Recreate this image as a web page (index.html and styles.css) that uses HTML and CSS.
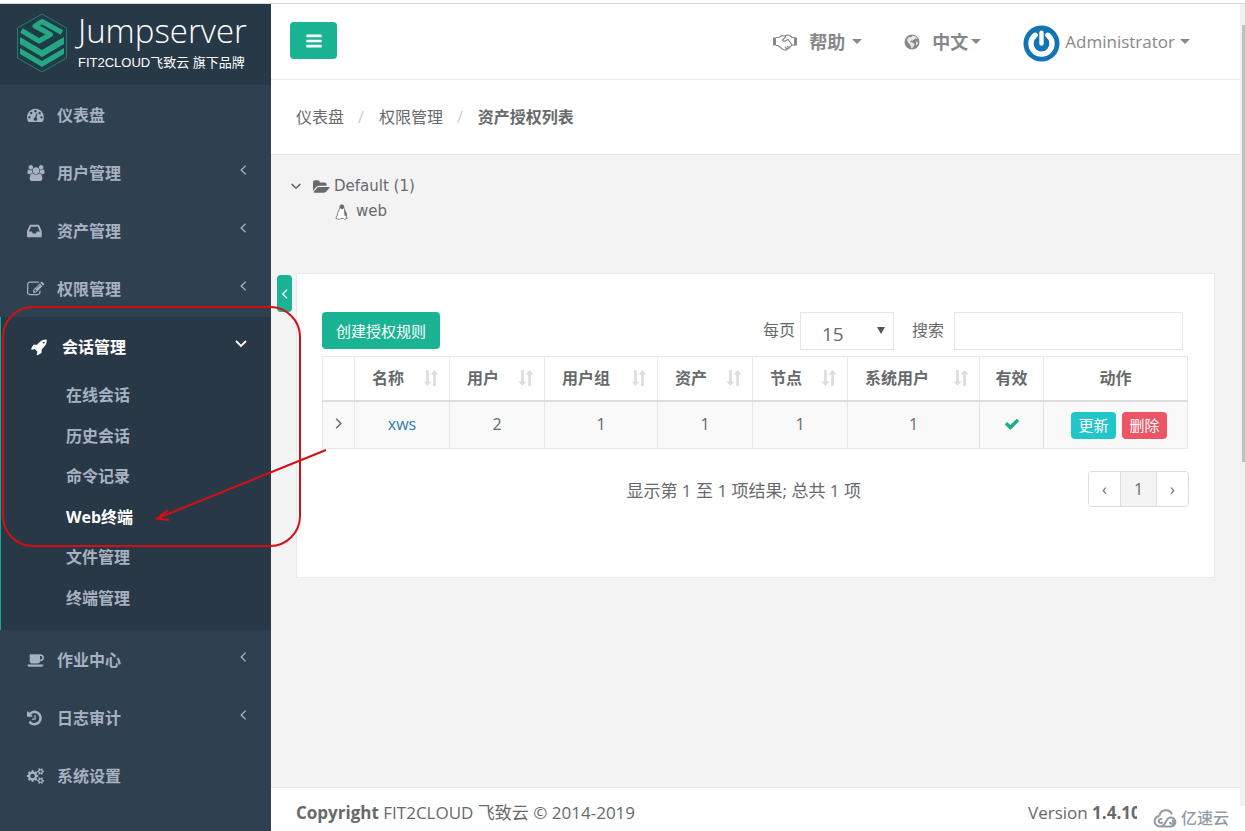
FILE: index.html
```html
<!DOCTYPE html>
<html lang="zh-CN">
<head>
<meta charset="utf-8">
<title>Jumpserver</title>
<link rel="stylesheet" href="styles.css">
</head>
<body>
<svg class="sprite" aria-hidden="true">
  <symbol id="i-left" viewBox="0 0 10 16"><path d="M8 3L3 8l5 5" fill="none" stroke="currentColor" stroke-width="1.6"/></symbol>
  <symbol id="i-right" viewBox="0 0 10 16"><path d="M2 3l5 5-5 5" fill="none" stroke="currentColor" stroke-width="1.6"/></symbol>
  <symbol id="i-down" viewBox="0 0 16 10"><path d="M3 2l5 5 5-5" fill="none" stroke="currentColor" stroke-width="1.8"/></symbol>
  <symbol id="i-sort" viewBox="0 0 18 20"><path d="M3.500 1h3v13h3L5 19 .5 14h3zM11.500 19h3V6h3L13 1 8.500 6h3z" fill="currentColor"/></symbol>
</svg>
<div class="app">
  <nav class="sidebar">
    <a class="brand" href="#">
      <svg class="brand-mark" viewBox="0 0 52 60" aria-hidden="true">
        <path d="M26 1l24.500 14v30L26 59 1.500 45V15z" fill="#1d3c46" stroke="#2b7a70"/>
        <path d="M5.500 17.500L23 28l11.500-6.500L19 13l7-4.500 20 11" fill="none" stroke="#26a784" stroke-width="5" stroke-linejoin="round"/>
        <path d="M4 24l22 13 22-13v7L26 44 4 31zM4 35l22 13 22-13v6L26 54 4 41z" fill="#26a784"/>
      </svg>
      <span class="brand-text"><span class="brand-name">Jumpserver</span><span class="brand-sub">FIT2CLOUD飞致云 旗下品牌</span></span>
    </a>
    <ul class="menu">
      <li><a href="#"><svg class="icon" viewBox="0 64 1700 1700" preserveAspectRatio="xMinYMid"><path d="M384 1152q0-53-37.500-90.500t-90.500-37.500-90.500 37.500-37.500 90.500 37.500 90.500 90.500 37.500 90.500-37.500 37.500-90.500zm192-448q0-53-37.500-90.500t-90.500-37.500-90.500 37.500-37.500 90.500 37.500 90.500 90.500 37.500 90.500-37.500 37.500-90.500zm428 481l101-382q6-26-7.500-48.500t-38.500-29.500-48 6.500-30 39.500l-101 382q-60 5-107 43.500t-63 98.500q-20 77 20 146t117 89 146-20 89-117q16-60-6-117t-72-91zm660-33q0-53-37.500-90.500t-90.500-37.500-90.500 37.500-37.500 90.500 37.500 90.500 90.500 37.500 90.500-37.500 37.500-90.500zm-640-640q0-53-37.500-90.500t-90.500-37.500-90.500 37.500-37.500 90.500 37.500 90.500 90.500 37.500 90.500-37.500 37.500-90.500zm448 192q0-53-37.500-90.500t-90.500-37.500-90.500 37.500-37.500 90.500 37.500 90.500 90.500 37.500 90.500-37.500 37.500-90.500zm320 448q0 261-141 483-19 29-54 29h-1402q-35 0-54-29-141-221-141-483 0-182 71-348t191-286 286-191 348-71 348 71 286 191 191 286 71 348z"/></svg><span>仪表盘</span></a></li>
      <li><a href="#"><svg class="icon" viewBox="0 0 1920 1792"><path d="M593 896q-162 5-265 128h-134q-82 0-138-40.500t-56-118.500q0-353 124-353 6 0 43.500 21t97.500 42.500 119 21.500q67 0 133-23-5 37-5 66 0 159 81 286zm1071 637q0 120-73 189.500t-194 69.500h-874q-121 0-194-69.500t-73-189.500q0-53 3.500-103.500t14-109 26.500-108.500 43-97.500 62-81 85.500-53.500 111.500-20q10 0 43 21.500t73 48 107 48 135 21.500 135-21.500 107-48 73-48 43-21.500q61 0 111.500 20t85.500 53.500 62 81 43 97.500 26.500 108.500 14 109 3.500 103.500zm-1024-1277q0 106-75 181t-181 75-181-75-75-181 75-181 181-75 181 75 75 181zm704 384q0 159-112.500 271.500t-271.500 112.500-271.500-112.500-112.500-271.500 112.500-271.500 271.500-112.500 271.500 112.500 112.500 271.500zm576 225q0 78-56 118.500t-138 40.500h-134q-103-123-265-128 81-127 81-286 0-29-5-66 66 23 133 23 59 0 119-21.500t97.500-42.500 43.500-21q124 0 124 353zm-128-609q0 106-75 181t-181 75-181-75-75-181 75-181 181-75 181 75 75 181z"/></svg><span>用户管理</span><svg class="arrow"><use href="#i-left"/></svg></a></li>
      <li><a href="#"><svg class="icon" viewBox="128 64 1664 1664" preserveAspectRatio="xMinYMid"><path d="M1151 960h316q-1-3-2.500-8.500t-2.500-7.500l-212-496h-708l-212 496q-1 3-2.500 8.500t-2.500 7.500h316l95 192h320zm513 30v482q0 26-19 45t-45 19h-1408q-26 0-45-19t-19-45v-482q0-62 25-123l238-552q10-25 36.500-42t52.500-17h832q26 0 52.500 17t36.500 42l238 552q25 61 25 123z"/></svg><span>资产管理</span><svg class="arrow"><use href="#i-left"/></svg></a></li>
      <li><a href="#"><svg class="icon" viewBox="0 64 1664 1664" preserveAspectRatio="xMinYMid"><path d="M888 1184l116-116-152-152-116 116v56h96v96h56zm440-720q-16-16-33 1l-350 350q-17 17-1 33t33-1l350-350q17-17 1-33zm80 594v190q0 119-84.500 203.500t-203.500 84.500h-832q-119 0-203.500-84.500t-84.500-203.500v-832q0-119 84.500-203.500t203.500-84.500h832q63 0 117 25 15 7 18 23 3 17-9 29l-49 49q-14 14-32 8-23-6-45-6h-832q-66 0-113 47t-47 113v832q0 66 47 113t113 47h832q66 0 113-47t47-113v-126q0-13 9-22l64-64q15-15 35-7t20 29zm-96-738l288 288-672 672h-288v-288zm444 132l-92 92-288-288 92-92q28-28 68-28t68 28l152 152q28 28 28 68t-28 68z"/></svg><span>权限管理</span><svg class="arrow"><use href="#i-left"/></svg></a></li>
      <li class="open">
        <a href="#"><svg class="icon" viewBox="128 64 1664 1664" preserveAspectRatio="xMinYMid"><path d="M1440 448q0-40-28-68t-68-28-68 28-28 68 28 68 68 28 68-28 28-68zm224-288q0 249-75.500 430.500t-253.500 360.500q-81 80-195 176l-20 379q-2 16-16 26l-384 224q-7 4-16 4-12 0-23-9l-64-64q-13-14-8-32l85-276-281-281-276 85q-3 1-9 1-14 0-23-9l-64-64q-17-19-5-39l224-384q10-14 26-16l379-20q96-114 176-195 188-187 358-258t431-71q14 0 24 9.500t10 22.500z"/></svg><span>会话管理</span><svg class="arrow arrow-down"><use href="#i-down"/></svg></a>
        <ul class="submenu">
          <li><a href="#">在线会话</a></li>
          <li><a href="#">历史会话</a></li>
          <li><a href="#">命令记录</a></li>
          <li><a class="current" href="#">Web终端</a></li>
          <li><a href="#">文件管理</a></li>
          <li><a href="#">终端管理</a></li>
        </ul>
      </li>
      <li><a href="#"><svg class="icon" viewBox="0 0 1920 1792"><path d="M1664 640q0-80-56-136t-136-56h-64v384h64q80 0 136-56t56-136zm-1664 768h1792q0 106-75 181t-181 75h-1280q-106 0-181-75t-75-181zm1856-768q0 159-112.500 271.500t-271.500 112.500h-64v32q0 92-66 158t-158 66h-704q-92 0-158-66t-66-158v-736q0-26 19-45t45-19h1152q159 0 271.500 112.500t112.500 271.500z"/></svg><span>作业中心</span><svg class="arrow"><use href="#i-left"/></svg></a></li>
      <li><a href="#"><svg class="icon" viewBox="128 64 1664 1664" preserveAspectRatio="xMinYMid"><path d="M1664 896q0 156-61 298t-164 245-245 164-298 61q-172 0-327-72.500t-264-204.500q-7-10-6.500-22.500t8.500-20.500l137-138q10-9 25-9 16 2 23 12 73 95 179 147t225 52q104 0 198.500-40.500t163.500-109.500 109.500-163.500 40.500-198.500-40.500-198.500-109.500-163.500-163.500-109.500-198.500-40.500q-98 0-188 35.500t-160 101.500l137 138q31 30 14 69-17 40-59 40h-448q-26 0-45-19t-19-45v-448q0-42 40-59 39-17 69 14l130 129q107-101 244.500-156.500t284.500-55.500q156 0 298 61t245 164 164 245 61 298zm-640-288v448q0 14-9 23t-23 9h-320q-14 0-23-9t-9-23v-64q0-14 9-23t23-9h224v-352q0-14 9-23t23-9h64q14 0 23 9t9 23z"/></svg><span>日志审计</span><svg class="arrow"><use href="#i-left"/></svg></a></li>
      <li><a href="#"><svg class="icon" viewBox="0 0 1920 1792"><path d="M832 896q0-106-75-181t-181-75-181 75-75 181 75 181 181 75 181-75 75-181zm768 512q0-52-38-90t-90-38-90 38-38 90q0 53 37.500 90.500t90.500 37.500 90.500-37.500 37.500-90.500zm0-1024q0-52-38-90t-90-38-90 38-38 90q0 53 37.500 90.500t90.500 37.500 90.500-37.500 37.500-90.500zm-384 421v185q0 10-7 19.500t-16 10.500l-155 24q-11 35-32 76 34 48 90 115 7 11 7 20 0 12-7 19-23 30-82.500 89.500t-78.500 59.500q-11 0-21-7l-115-90q-37 19-77 31-11 108-23 155-7 24-30 24h-186q-11 0-20-7.500t-10-17.500l-23-153q-34-10-75-31l-118 89q-7 7-20 7-11 0-21-8-144-133-144-160 0-9 7-19 10-14 41-53t47-61q-23-44-35-82l-152-24q-10-1-17-9.500t-7-19.500v-185q0-10 7-19.500t16-10.500l155-24q11-35 32-76-34-48-90-115-7-11-7-20 0-12 7-20 22-30 82-89t79-59q11 0 21 7l115 90q34-18 77-32 11-108 23-154 7-24 30-24h186q11 0 20 7.500t10 17.500l23 153q34 10 75 31l118-89q8-7 20-7 11 0 21 8 144 133 144 160 0 8-7 19-12 16-42 54t-45 60q23 48 34 82l152 23q10 2 17 10.500t7 19.500zm640 533v140q0 16-149 31-12 27-30 52 51 113 51 138 0 4-4 7-122 71-124 71-8 0-46-47t-52-68q-20 2-30 2t-30-2q-14 21-52 68t-46 47q-2 0-124-71-4-3-4-7 0-25 51-138-18-25-30-52-149-15-149-31v-140q0-16 149-31 13-29 30-52-51-113-51-138 0-4 4-7 4-2 35-20t59-34 30-16q8 0 46 46.500t52 67.500q20-2 30-2t30 2q51-71 92-112l6-2q4 0 124 70 4 3 4 7 0 25-51 138 17 23 30 52 149 15 149 31zm0-1024v140q0 16-149 31-12 27-30 52 51 113 51 138 0 4-4 7-122 71-124 71-8 0-46-47t-52-68q-20 2-30 2t-30-2q-14 21-52 68t-46 47q-2 0-124-71-4-3-4-7 0-25 51-138-18-25-30-52-149-15-149-31v-140q0-16 149-31 13-29 30-52-51-113-51-138 0-4 4-7 4-2 35-20t59-34 30-16q8 0 46 46.500t52 67.500q20-2 30-2t30 2q51-71 92-112l6-2q4 0 124 70 4 3 4 7 0 25-51 138 17 23 30 52 149 15 149 31z"/></svg><span>系统设置</span></a></li>
    </ul>
  </nav>

  <div class="page">
    <header class="topbar">
      <button class="toggle" type="button" aria-label="菜单"><svg class="icon" viewBox="0 0 1792 1792"><path d="M1664 1344v128q0 26-19 45t-45 19h-1408q-26 0-45-19t-19-45v-128q0-26 19-45t45-19h1408q26 0 45 19t19 45zm0-512v128q0 26-19 45t-45 19h-1408q-26 0-45-19t-19-45v-128q0-26 19-45t45-19h1408q26 0 45 19t19 45zm0-512v128q0 26-19 45t-45 19h-1408q-26 0-45-19t-19-45v-128q0-26 19-45t45-19h1408q26 0 45 19t19 45z"/></svg></button>
      <div class="toplinks">
        <a class="toplink" href="#"><svg class="handshake" viewBox="0 0 24 18" aria-hidden="true"><path d="M1.500 4.500v8M22.500 4.500v8" stroke-width="3"/><path d="M3 4.500h3l3-2 3 .5 2-1 3 .5 2 2h3M3 12.500h2l5 4 3 .5 3-2 3-3h3M13 3.500L9.500 7q1 2.500 3.500.5L15 6.500l4 5M14 13l2 2M12 14l2 2" stroke-width="1.200"/></svg><b>帮助</b><i class="caret"></i></a>
        <a class="toplink language" href="#"><svg class="globe" viewBox="0 0 16 16" aria-hidden="true"><circle cx="8" cy="8" r="7.500" fill="currentColor"/><path d="M8.500 1.500l3 1 2 2-1 .5-1-.5-1.500 1-1.500 1L7 6.500l-1 1.500 2.500.5 2 1.500-.5 2-2 2.500-1-1-.5-2.500L5 9.500 3.500 7.500 3 5.500l2-2.500 1 .5 1.500-.5zM12 8l1.500-.5.5 2-1.500 2-.5-1.500z" fill="#fff" opacity=".8"/></svg><b>中文</b><i class="caret"></i></a>
        <a class="toplink user" href="#"><svg class="avatar" viewBox="0 0 38 38" aria-hidden="true"><circle cx="19" cy="19" r="18.500" fill="#1274b5"/><path d="M12.500 10.500A10.800 10.800 0 1 0 25.500 10.500" fill="none" stroke="#fff" stroke-width="5.500" stroke-linecap="round"/><path d="M19 8v11" stroke="#fff" stroke-width="4.500" stroke-linecap="round"/></svg><span>Administrator</span><i class="caret"></i></a>
      </div>
    </header>

    <ol class="crumbs">
      <li><a href="#">仪表盘</a></li>
      <li><a href="#">权限管理</a></li>
      <li><strong>资产授权列表</strong></li>
    </ol>

    <main class="content">
      <ul class="tree">
        <li><svg class="tree-toggle"><use href="#i-down"/></svg><svg class="folder" viewBox="0 0 1920 1792" aria-hidden="true"><path d="M1879 952q0 31-31 66l-336 396q-43 51-120.500 86.500t-143.500 35.500h-1088q-34 0-60.500-13t-26.500-43q0-31 31-66l336-396q43-51 120.500-86.500t143.500-35.500h1088q34 0 60.500 13t26.500 43zm-343-344v160h-832q-94 0-197 47.500t-164 119.500l-337 396-5 6v-985q0-92 66-158t158-66h320q92 0 158 66t66 158v32h544q92 0 158 66t66 158z"/></svg><span>Default (1)</span></li>
        <li class="leaf"><svg class="linux" viewBox="0 0 14 16" aria-hidden="true"><path d="M5 1.500q2-2 3.500 0Q9 5 10.500 7.500q2 3 .5 5.500l1.500 1-3 1.500-1-1h-3l-1 1L1 14.500 1.500 12l1-.5q-.5-2 1-4.500Q5 5 5 1.500z" fill="#fff" stroke="currentColor" stroke-width=".8"/><path d="M5.500 1h3L9 4l-2 1.500L5 4zM9 5l2.500 4.500v3l-2-1z" fill="currentColor"/></svg><span>web</span></li>
      </ul>

      <section class="panel">
        <button class="fold" type="button" aria-label="收起"><svg><use href="#i-left"/></svg></button>
        <div class="tools">
          <button class="btn create" type="button">创建授权规则</button>
          <div class="filters">
            <label for="size">每页</label>
            <span class="select-wrap"><select id="size"><option>15</option></select></span>
            <label class="search-label" for="q">搜索</label>
            <input id="q" type="text">
          </div>
        </div>
        <table class="grid">
          <colgroup><col class="c1"><col class="c2"><col class="c2"><col class="c3"><col class="c2"><col class="c2"><col class="c4"><col class="c5"><col class="c6"></colgroup>
          <thead><tr>
            <th></th>
            <th class="sort"><div><span>名称</span><svg><use href="#i-sort"/></svg></div></th>
            <th class="sort"><div><span>用户</span><svg><use href="#i-sort"/></svg></div></th>
            <th class="sort"><div><span>用户组</span><svg><use href="#i-sort"/></svg></div></th>
            <th class="sort"><div><span>资产</span><svg><use href="#i-sort"/></svg></div></th>
            <th class="sort"><div><span>节点</span><svg><use href="#i-sort"/></svg></div></th>
            <th class="sort"><div><span>系统用户</span><svg><use href="#i-sort"/></svg></div></th>
            <th>有效</th>
            <th>动作</th>
          </tr></thead>
          <tbody><tr>
            <td><svg class="expand"><use href="#i-right"/></svg></td>
            <td><a href="#">xws</a></td>
            <td>2</td><td>1</td><td>1</td><td>1</td><td>1</td>
            <td><svg class="check" viewBox="0 0 1792 1792"><path d="M1671 566q0 40-28 68l-724 724-136 136q-28 28-68 28t-68-28l-136-136-362-362q-28-28-28-68t28-68l136-136q28-28 68-28t68 28l294 295 656-657q28-28 68-28t68 28l136 136q28 28 28 68z"/></svg></td>
            <td><div class="actions"><button class="btn update" type="button">更新</button><button class="btn delete" type="button">删除</button></div></td>
          </tr></tbody>
        </table>
        <div class="results">
          <p>显示第 1 至 1 项结果; 总共 1 项</p>
          <div class="pager"><button type="button">‹</button><button class="on" type="button">1</button><button type="button">›</button></div>
        </div>
      </section>
    </main>

    <footer class="footer">
      <div><strong>Copyright</strong> FIT2CLOUD 飞致云 © 2014-2019</div>
      <div class="version">Version <strong>1.4.10</strong></div>
    </footer>
  </div>
  <div class="scroll"><div class="thumb"></div></div>
</div>

<svg class="marks" viewBox="0 0 340 260" aria-hidden="true">
  <rect x="3" y="7" width="297" height="239" rx="30"/>
  <path d="M326 150L158 218M168 210l-11 8.500 12 1.500"/>
</svg>
<div class="watermark"><svg viewBox="0 0 26 20" aria-hidden="true"><path d="M6.500 7.500a6.500 6.500 0 0 1 12.500-1M9 11.500a2 2 0 1 0 .5 2.500M6.500 8a5.300 5.300 0 1 0 5 8l3-5a4.500 4.500 0 1 1 3.500 7.500H7M17 14a1.700 1.700 0 1 0 2-1.500"/></svg><span>亿速云</span></div>
</body>
</html>
```
FILE: styles.css
```css
* { box-sizing: border-box; }
body { margin: 0; min-height: 100vh; background: #fff; color: #676a6c; font: 16px/24px "Open Sans", "Noto Sans CJK SC", sans-serif; }
a { color: inherit; text-decoration: none; }
ul, ol { list-style: none; margin: 0; padding: 0; }
button, input, select { font: inherit; }
button { cursor: pointer; border: 0; padding: 0; }
svg { display: block; flex: none; }
.sprite { display: none; }

.app { display: flex; min-height: 100vh; padding-top: 4px; position: relative; }
.app::before { content: ""; position: absolute; top: 3px; left: 0; right: 0; border-top: 1px solid #d9d9d9; }

.sidebar { flex: none; width: 271px; background: #2f4050; color: #a7b1c2; font-weight: 600; }
.brand { display: flex; align-items: flex-start; gap: 10px; height: 81px; padding: 9px 16px; background: #273847; color: #fff; }
.brand-mark { width: 52px; height: 60px; }
.brand-text { display: flex; flex-direction: column; font-weight: 400; white-space: nowrap; }
.brand-name { font: 300 33px/36px "Open Sans", sans-serif; }
.brand-sub { font: 13px/28px "Liberation Sans", "Noto Sans CJK SC", sans-serif; }
.menu a { display: flex; align-items: center; height: 58px; padding: 2px 23px 0 27px; }
.menu a span { flex: 1; margin-left: 12px; }
.icon { width: 18px; height: 16px; fill: currentColor; overflow: visible; }
.arrow { width: 10px; height: 14px; margin-bottom: 6px; }
.arrow-down { width: 16px; height: 10px; }
.open { background: #293846; border-left: 1px solid #19aa8d; padding-bottom: 12px; }
.open > a { color: #fff; padding: 2px 22px 0 31px; }
.submenu { display: grid; grid-template-rows: repeat(6, 1fr); height: 243px; }
.menu .submenu a { height: 100%; padding: 0 0 0 65px; }
.submenu .current { color: #fff; font-weight: 700; }

.page { flex: 1; min-width: 0; display: flex; flex-direction: column; }
.topbar { display: flex; justify-content: space-between; height: 76px; padding: 0 50px 0 19px; border-bottom: 1px solid #e7eaec; }
.toggle { width: 47px; height: 37px; margin-top: 18px; border-radius: 4px; background: #1ab394; color: #fff; display: flex; align-items: center; justify-content: center; }
.toggle .icon { width: 18px; height: 18px; }
.toplinks { display: flex; align-items: center; gap: 42px; color: #888; }
.toplink { display: flex; align-items: center; gap: 7px; font-size: 17px; }
.toplink b { font-weight: 700; font-size: 18px; }
.handshake { width: 24px; height: 18px; margin-right: 5px; fill: none; stroke: currentColor; }
.globe { width: 16px; height: 16px; margin-right: 9px; }
.language { gap: 3px; }
.avatar { width: 37px; height: 37px; margin-top: 3px; }
.user { gap: 5px; }
.caret { border: 5px solid transparent; border-top-color: currentColor; border-bottom: 0; }

.crumbs { display: flex; align-items: center; height: 75px; padding-left: 25px; border-bottom: 1px solid #e7eaec; }
.crumbs li + li::before { content: "/"; color: #ccc; padding: 0 15px 0 14px; }
.crumbs strong { font-weight: 600; }

.content { flex: 1; background: #f3f3f4; padding: 19px 25px; }
.tree { height: 99px; font: 15px/25px "DejaVu Sans", sans-serif; }
.tree li { display: flex; align-items: center; height: 25px; margin-left: -7px; }
.tree-toggle { width: 14px; height: 9px; margin-right: 10px; }
.folder { width: 17px; height: 16px; margin-right: 4px; fill: currentColor; }
.tree .leaf { padding-left: 46px; }
.linux { width: 14px; height: 16px; margin-right: 7px; }

.panel { position: relative; background: #fff; border: 1px solid #e7eaec; padding: 38px 26px 70px 25px; }
.fold { position: absolute; left: -20px; top: 1px; width: 15px; height: 37px; border-radius: 4px; background: #1ab394; color: #fff; display: grid; place-items: center; }
.fold svg { width: 9px; height: 14px; }
.tools { display: flex; justify-content: space-between; margin-bottom: 6px; }
.btn { color: #fff; border-radius: 4px; }
.create { width: 118px; height: 37px; font-size: 15px; background: #1ab394; }
.filters { display: flex; align-items: center; padding-right: 5px; }
.filters label { padding-bottom: 3px; }
.select-wrap { position: relative; margin-left: 5px; }
.select-wrap::after { content: ""; position: absolute; right: 9px; top: 15px; border: 4px solid transparent; border-top: 7px solid #555; border-bottom: 0; pointer-events: none; }
select { appearance: none; display: block; width: 94px; height: 38px; padding: 5px 20px 0 21px; border: 1px solid #e5e6e7; border-radius: 0; background: #fff; color: inherit; font-size: 19px; }
.search-label { margin-left: 18px; }
.filters input { width: 229px; height: 38px; margin-left: 10px; border: 1px solid #e5e6e7; padding: 6px 12px; }

.grid { width: 100%; table-layout: fixed; border-collapse: collapse; text-align: center; }
.grid th, .grid td { border: 1px solid #e7e7e7; padding: 0; }
.grid th { height: 44px; border-bottom: 2px solid #ddd; font-weight: 600; }
.grid td { height: 48px; padding-bottom: 2px; background: #f9f9f9; }
.c1 { width: 32px; } .c2 { width: 95px; } .c3 { width: 113px; } .c4 { width: 132px; } .c5 { width: 64px; } .c6 { width: 144px; }
.sort div { display: flex; align-items: center; justify-content: space-between; padding: 0 10px 0 17px; }
.sort span { flex: none; }
.sort svg { width: 16px; height: 18px; color: #ddd; }
.grid a { color: #337ab7; }
.expand { width: 10px; height: 15px; margin: auto; }
.check { width: 16px; height: 16px; margin: auto; fill: #1aae88; }
.actions { display: flex; justify-content: center; gap: 6px; padding: 3px 0 0 7px; }
.actions .btn { width: 45px; height: 27px; font-size: 15px; line-height: 24px; }
.update { background: #23c6c8; }
.delete { background: #ed5565; }

.results { display: flex; justify-content: flex-end; align-items: flex-start; gap: 227px; margin: 22px -1px 0 0; }
.results p { margin: 8px 0 0; font-size: 17px; }
.pager { display: flex; height: 36px; border: 1px solid #ddd; border-radius: 4px; overflow: hidden; }
.pager button { width: 31px; background: #fff; color: inherit; }
.pager .on { width: 37px; background: #f4f4f4; border: solid #ddd; border-width: 0 1px; }

.footer { display: flex; justify-content: space-between; height: 44px; padding: 13px 103px 0 25px; border-top: 1px solid #e7eaec; font-size: 17px; }
.version { width: 109px; overflow: hidden; white-space: nowrap; }

.scroll { flex: none; width: 5px; background: #f1f1f1; padding: 21px 0 0 2px; margin-bottom: 25px; display: grid; grid-template-rows: 56fr 44fr; }
.thumb { background: #c1c1c1; }

.marks { position: absolute; left: 0; top: 300px; width: 340px; height: 260px; fill: none; stroke: #d40f14; stroke-width: 2; pointer-events: none; }
.watermark { position: absolute; right: 16px; bottom: 1px; display: flex; align-items: center; gap: 2px; color: #929aa8; font-weight: 500; }
.watermark svg { width: 26px; height: 20px; fill: none; stroke: currentColor; stroke-width: 2; }
```
